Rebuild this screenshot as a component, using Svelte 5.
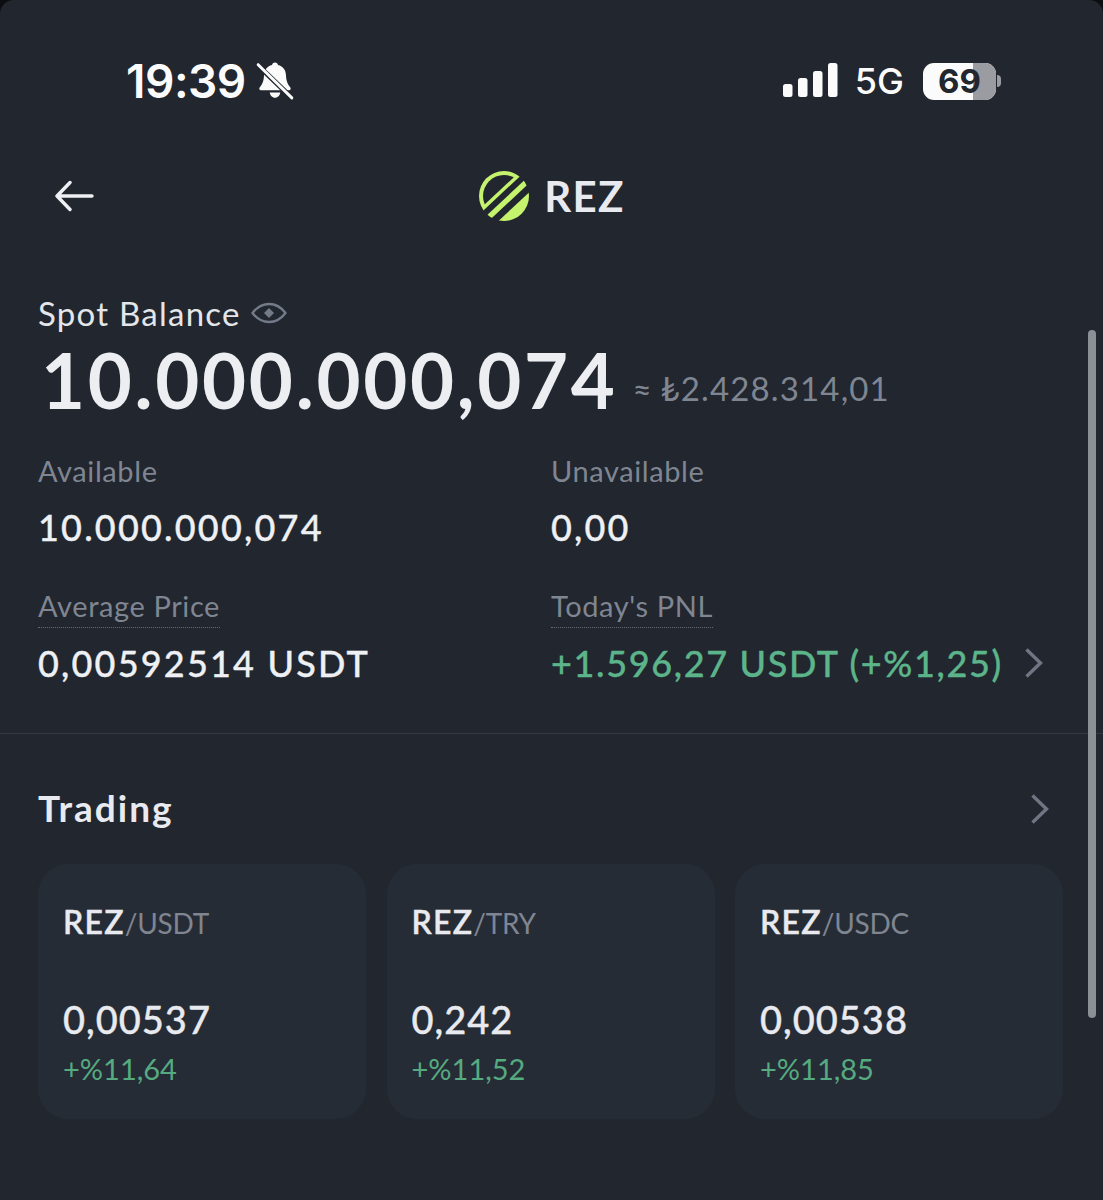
<script>
  const pairs = [
    { base: 'REZ', quote: '/USDT', price: '0,00537', change: '+%11,64' },
    { base: 'REZ', quote: '/TRY', price: '0,242', change: '+%11,52' },
    { base: 'REZ', quote: '/USDC', price: '0,00538', change: '+%11,85' }
  ];
</script>

<div class="screen">
  <header class="status">
    <div class="time-wrap">
      <span class="time">19:39</span>
      <svg class="bell" width="40" height="40" viewBox="0 0 38 38">
        <path fill="#fbfbfc" d="M19 1.500c1.600 0 2.600 1.100 2.800 2.400 5 1.200 7.400 5 7.600 9.500.2 5 1.200 8.600 3.800 11.200 1.300 1.300.7 3.300-1.200 3.300H6c-1.900 0-2.500-2-1.200-3.300 2.600-2.600 3.600-6.200 3.800-11.200.2-4.500 2.600-8.300 7.600-9.500.2-1.300 1.200-2.400 2.800-2.400z"/>
        <path fill="#fbfbfc" d="M14 30h10c-.3 2.800-2.400 5-5 5s-4.700-2.200-5-5z"/>
        <path stroke="#21262f" stroke-width="4.800" d="M1 2.500l35 33.500"/>
        <path stroke="#fbfbfc" stroke-width="2.800" stroke-linecap="round" d="M3 3.500l32 31.500"/>
      </svg>
    </div>
    <div class="sys">
      <svg class="signal" width="56" height="36" viewBox="0 0 56 36" fill="#fbfbfc">
        <rect x="1" y="21" width="9.500" height="13" rx="2.500"/>
        <rect x="16" y="15" width="9.500" height="19" rx="2.500"/>
        <rect x="31" y="8" width="9.500" height="26" rx="2.500"/>
        <rect x="46" y="0" width="9.500" height="34" rx="2.500"/>
      </svg>
      <span class="net">5G</span>
      <div class="battery">
        <div class="batt-body"><span>69</span><i></i></div>
        <b></b>
      </div>
    </div>
  </header>

  <nav class="topbar">
    <svg class="back" width="40" height="32" viewBox="0 0 40 32" fill="none" stroke="#eef0f4" stroke-width="3.400" stroke-linecap="round" stroke-linejoin="round">
      <path d="M2 16h35M15 2.500 2 16l13 13.500"/>
    </svg>
    <div class="coin">
      <svg width="52" height="52" viewBox="-26 -26 52 52">
        <defs>
          <clipPath id="rez-outer"><circle r="25"/></clipPath>
          <clipPath id="rez-inner"><circle r="21"/></clipPath>
        </defs>
        <g clip-path="url(#rez-outer)">
          <g transform="rotate(-43)" fill="#c6f36d">
            <rect x="-30" y="-30" width="60" height="26.500"/>
            <rect x="-30" y="2.400" width="60" height="5.400"/>
            <rect x="-30" y="14.500" width="60" height="17"/>
          </g>
        </g>
        <g clip-path="url(#rez-inner)">
          <g transform="rotate(-43)">
            <rect x="-30" y="-30" width="60" height="23" fill="#21262f"/>
          </g>
        </g>
      </svg>
      <span>REZ</span>
    </div>
  </nav>

  <section class="balance">
    <div class="label-row">
      <span class="spot">Spot Balance</span>
      <svg width="36" height="24" viewBox="0 0 36 24" fill="none" stroke="#747b88" stroke-width="2.400" stroke-linejoin="round">
        <path d="M1.500 12C6 6 11.500 3 18 3s12 3 16.500 9C30 18 24.500 21 18 21S6 18 1.500 12z"/>
        <path fill="#747b88" stroke="none" d="m18 7 5 5-5 5-5-5z"/>
      </svg>
    </div>
    <div class="amount-row">
      <span class="amount">10.000.000,074</span>
      <span class="fiat">≈ ₺2.428.314,01</span>
    </div>

    <div class="grid">
      <div class="cell">
        <span class="muted">Available</span>
        <span class="value">10.000.000,074</span>
      </div>
      <div class="cell">
        <span class="muted">Unavailable</span>
        <span class="value">0,00</span>
      </div>
      <div class="cell">
        <span class="muted dotted">Average Price</span>
        <span class="value">0,00592514 USDT</span>
      </div>
      <div class="cell">
        <span class="muted dotted">Today's PNL</span>
        <div class="pnl">
          <span class="value green">+1.596,27 USDT (+%1,25)</span>
          <svg width="20" height="32" viewBox="0 0 20 32" fill="none" stroke="#6f7582" stroke-width="3.400"><path d="m2.500 2.500 14 13.500-14 13.500"/></svg>
        </div>
      </div>
    </div>
  </section>

  <section class="trading">
    <div class="trading-head">
      <h2>Trading</h2>
      <svg class="head-chevron" width="20" height="32" viewBox="0 0 20 32" fill="none" stroke="#6f7582" stroke-width="3.400"><path d="m2.500 2.500 14 13.500-14 13.500"/></svg>
    </div>
    <div class="cards">
      {#each pairs as p}
        <article class="card">
          <div class="pair"><strong>{p.base}</strong><span>{p.quote}</span></div>
          <div class="price">{p.price}</div>
          <div class="change">{p.change}</div>
        </article>
      {/each}
    </div>
  </section>

  <div class="scrollbar"></div>
</div>

<style>
  :global(body) {
    margin: 0;
    background: #0c0d10;
  }
  .screen {
    position: relative;
    width: 1103px;
    height: 1200px;
    box-sizing: border-box;
    background: #21262f;
    border-radius: 14px 14px 0 0;
    font-family: Lato, "Open Sans", sans-serif;
    color: #eef0f4;
    overflow: hidden;
  }
  .status {
    height: 162px;
    box-sizing: border-box;
    padding: 55px 102px 0 126px;
    display: flex;
    justify-content: space-between;
    align-items: flex-start;
  }
  .time-wrap {
    display: flex;
    align-items: center;
    gap: 9px;
  }
  .time {
    font-family: Inter, sans-serif;
    font-size: 46px;
    font-weight: 600;
    line-height: 52px;
    color: #fbfbfc;
    letter-spacing: -0.5px;
  }
  .sys {
    display: flex;
    align-items: center;
    gap: 19px;
    height: 52px;
  }
  .signal {
    margin-right: -2px;
  }
  .net {
    font-family: Inter, sans-serif;
    font-size: 36px;
    font-weight: 500;
    color: #fbfbfc;
  }
  .battery {
    display: flex;
    align-items: center;
    gap: 1px;
  }
  .batt-body {
    position: relative;
    width: 73px;
    height: 37px;
    border-radius: 11px;
    background: #fbfbfc;
    overflow: hidden;
    display: flex;
    align-items: center;
    justify-content: center;
  }
  .batt-body span {
    position: relative;
    z-index: 1;
    font-family: Inter, sans-serif;
    font-size: 33px;
    font-weight: 700;
    color: #21262f;
  }
  .batt-body i {
    position: absolute;
    right: 0;
    top: 0;
    bottom: 0;
    width: 23px;
    background: #9a9ca1;
  }
  .battery b {
    width: 4px;
    height: 12px;
    border-radius: 0 4px 4px 0;
    background: #9a9ca1;
  }
  .topbar {
    position: relative;
    height: 68px;
    display: flex;
    align-items: center;
    justify-content: center;
  }
  .back {
    position: absolute;
    left: 55px;
    top: 18px;
  }
  .coin {
    display: flex;
    align-items: center;
    gap: 14px;
    font-size: 42px;
    font-weight: 700;
    letter-spacing: 1.3px;
    color: #e8eaef;
  }
  .balance {
    padding: 63px 38px 0;
    height: 504px;
    box-sizing: border-box;
    border-bottom: 1px solid #333943;
  }
  .label-row {
    display: flex;
    align-items: center;
    gap: 10px;
    height: 40px;
  }
  .spot {
    font-size: 33px;
    letter-spacing: 1.25px;
    color: #e4e6ea;
  }
  .amount-row {
    display: flex;
    align-items: center;
    gap: 15px;
    margin-top: 1px;
    padding-left: 3px;
  }
  .amount {
    font-size: 76px;
    font-weight: 700;
    line-height: 92px;
    letter-spacing: 2.7px;
    color: #eceef2;
  }
  .fiat {
    margin-top: 16px;
    font-size: 33px;
    color: #7f8591;
    letter-spacing: 1.15px;
    word-spacing: -2px;
  }
  .grid {
    display: grid;
    grid-template-columns: 513px 1fr;
    row-gap: 38px;
    margin-top: 26px;
  }
  .cell {
    display: flex;
    flex-direction: column;
    align-items: flex-start;
    gap: 15px;
  }
  .muted {
    font-size: 29px;
    line-height: 38px;
    letter-spacing: 0.6px;
    color: #7f8591;
  }
  .dotted {
    border-bottom: 1.500px dotted #626874;
    height: 40px;
    margin-bottom: -2px;
  }
  .value {
    font-size: 36px;
    font-weight: 500;
    line-height: 44px;
    letter-spacing: 2.2px;
    color: #eef0f4;
    -webkit-text-stroke: 0.35px currentColor;
  }
  .pnl {
    display: flex;
    align-items: center;
    gap: 21px;
  }
  .green {
    color: #5cb58a;
    letter-spacing: 1.65px;
  }
  .trading {
    padding: 51px 40px 0 38px;
  }
  .trading-head {
    display: flex;
    align-items: center;
    justify-content: space-between;
    height: 44px;
    padding-right: 13px;
  }
  .head-chevron {
    margin-top: 3px;
  }
  h2 {
    margin: 0;
    font-size: 37px;
    font-weight: 700;
    letter-spacing: 2px;
    color: #e8eaef;
  }
  .cards {
    display: grid;
    grid-template-columns: repeat(3, 328px);
    column-gap: 20.500px;
    margin-top: 35px;
  }
  .card {
    height: 255px;
    box-sizing: border-box;
    padding: 38px 25px 0;
    border-radius: 30px;
    background: #262c35;
  }
  .pair {
    font-size: 32px;
    line-height: 40px;
  }
  .pair strong {
    font-weight: 600;
    letter-spacing: 1.2px;
    color: #e8eaef;
    -webkit-text-stroke: 0.4px currentColor;
  }
  .pair span {
    font-size: 28px;
    letter-spacing: -0.2px;
    color: #7f8591;
  }
  .price {
    margin-top: 53px;
    font-size: 38px;
    font-weight: 500;
    line-height: 46px;
    letter-spacing: 1px;
    color: #e8eaef;
    -webkit-text-stroke: 0.35px currentColor;
  }
  .change {
    margin-top: 8px;
    font-size: 29px;
    line-height: 38px;
    color: #55aa80;
  }
  .scrollbar {
    position: absolute;
    left: 1088px;
    top: 330px;
    width: 8px;
    height: 688px;
    border-radius: 4px;
    background: #8b8f96;
  }
</style>
